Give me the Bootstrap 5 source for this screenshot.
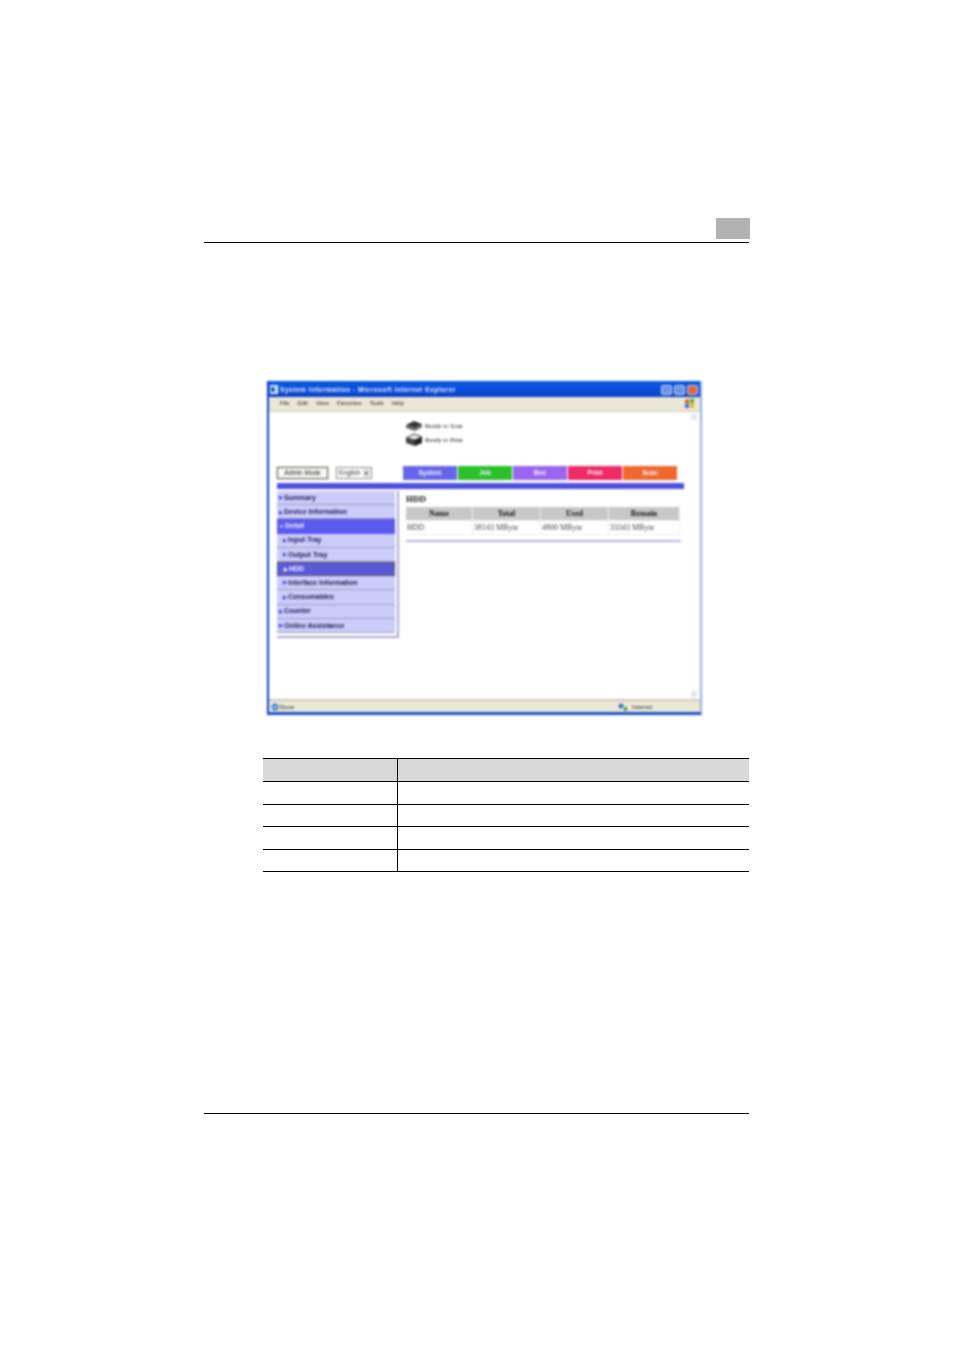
<!DOCTYPE html>
<html lang="en">
<head>
<meta charset="utf-8">
<title>HDD</title>
<link href="https://cdn.jsdelivr.net/npm/bootstrap@5.3.0/dist/css/bootstrap.min.css" rel="stylesheet">
<style>
html,body{background:#fff;margin:0;height:1350px;overflow:hidden}
.sheet{width:954px;height:1350px;padding:218px 205px 0 204px;font-family:"Liberation Sans",sans-serif}
.head-tab{width:34px;height:21px;background:#b2b2b2;margin-left:auto;margin-right:-1px}
.rule-top{border-top:1.5px solid #000;margin-top:3px;margin-right:0}
.shot{margin:138px 0 0 63px;width:435px;height:334px;background:#fff;filter:blur(.88px);border-left:2px solid #0a3fc4;border-right:2px solid #8fb0ee;border-bottom:3px solid #1c4fc8;overflow:hidden}
.title-bar{height:16px;background:linear-gradient(#0a5ae0,#0a4ad8 70%,#0b42c0);color:#eef3ff;font-size:6.5px;font-weight:700;letter-spacing:.55px;padding:1px 2px 0 1px;gap:2px}
.win-btns{gap:2px}
.win-btn{width:11px;height:10px;border-radius:2px;background:#6f93e6;border:1px solid #c5d4f5}
.win-close{background:#d9674a}
.menu-bar{height:15px;background:#ebe7d6;border-bottom:1px solid #cfcbb8;font-size:6px;color:#222;padding:0 5px 1px 11px;gap:8px}
.xp-flag{width:11px;height:11px}
.page-area{height:287px;padding:8px 7px 0 7px;position:relative}
.scroll-up{position:absolute;top:2px;right:3px;width:6px;height:6px;background:#e6e6e6}
.scroll-down{position:absolute;bottom:2px;right:3px;width:6px;height:6px;background:#e6e6e6}
.status-list{margin-left:129px;height:38px;font-family:"Liberation Serif",serif;font-size:6.5px;color:#111;gap:2px}
.status-item{height:12px;gap:2px}
.ctrl-row{margin-top:8px;height:14px}
.admin-btn{width:51px;height:12px;border:1px solid #666;background:#f7f7f4;font-size:6.5px;color:#222;margin-left:1px;box-shadow:0 0 0 1px #ddd}
.lang-box{width:36px;height:12px;border:1px solid #888;font-size:6.5px;color:#333;margin-left:8px;padding:0 1px 0 2px}
.lang-arrow{width:7px;height:8px;background:#ddd;color:#000;font-size:5px;line-height:8px;text-align:center}
.tab-row{margin-left:31px;width:274px;gap:1px}
.tab-item{height:14px;flex:1 1 0;color:#f4f4ff;font-size:6.5px;font-weight:700}
.t-sys{background:#6666e8}.t-job{background:#2cc02c}.t-box{background:#9a66ee}.t-print{background:#ee2a68}.t-scan{background:#f0672f}
.blue-strip{height:6px;background:#5050e0;margin:3px 9px 2px 1px}
.body-cols{gap:7px}
.side-nav{width:122px;margin-left:1px;height:147px;border-right:2px solid #a9a9d8;border-bottom:2px solid #a9a9d8;padding-right:2px;font-size:7px;font-weight:700;color:#1a1a50}
.nav-entry{height:14.2px;background:#ccccfb;border-bottom:1px solid #9d9db8;padding-left:2px;padding-top:1px;gap:1px}
.nav-sub{padding-left:6px}
.nav-open{background:#5a5aee;color:#eeeeff;border-bottom-color:#5a5aee}
.nav-current{background:#5a5ad8;color:#eeeeff;border:1px solid #55556a}
.nav-mark{font-size:5px;color:#3a3ae0}
.nav-open .nav-mark,.nav-current .nav-mark{color:#fff}
.detail{width:276px;font-family:"Liberation Serif",serif;padding-top:2px}
.detail-title{font-size:9px;font-weight:700;color:#111;height:12px;line-height:12px;margin-bottom:2px}
.hdd-grid{display:grid;grid-template-columns:66px 67px 67px 70px;gap:1px;font-size:8px;color:#444;width:274px;background:#eee;padding:0 1px 1px 0}
.hdd-h{background:#c8c8c8;height:13px;line-height:13px;text-align:center;font-weight:700;color:#111}
.hdd-c{background:#fff;height:13px;line-height:13px;padding-left:1px;white-space:nowrap}
.hdd-line{border-top:2px solid #b5b5e6;margin-top:5px;width:275px}
.status-bar{height:13px;background:#ece8d6;border-top:2px solid #cfcbbb;font-size:6px;color:#222;padding:1px 0 0 2px;gap:1px}
.zone{margin-left:auto;width:82px;gap:4px}
.spec-table{margin:43px 0 0 59px;width:486px;display:grid;grid-template-columns:135px 1fr;border-top:1px solid #000}
.spec-h{height:23px;background:#d9d9d9;border-bottom:1px solid #000}
.spec-c{height:22.5px;border-bottom:1px solid #000}
.spec-l{border-right:1px solid #000}
.rule-bottom{border-top:1.5px solid #000;margin-top:241px}
</style>
</head>
<body>
<div class="sheet">
  <div class="head-tab"></div>
  <div class="rule-top"></div>

  <div class="shot d-flex flex-column">
    <div class="title-bar d-flex align-items-center">
      <svg width="8" height="9" viewBox="0 0 8 9"><rect width="8" height="9" fill="#dfeaff"/><path d="M1 2h4v5H1z" fill="#2a62c8"/></svg>
      <span>System Information - Microsoft Internet Explorer</span>
      <span class="win-btns d-flex ms-auto"><span class="win-btn"></span><span class="win-btn"></span><span class="win-btn win-close"></span></span>
    </div>
    <div class="menu-bar d-flex align-items-center">
      <span>File</span><span>Edit</span><span>View</span><span>Favorites</span><span>Tools</span><span>Help</span>
      <svg class="xp-flag ms-auto" viewBox="0 0 11 11"><path d="M1 2l4-1v4l-4 .5z" fill="#d9542b"/><path d="M6 1l4-.5V5l-4 .3z" fill="#58a83a"/><path d="M1 6l4-.3v4L1 10z" fill="#3f6fd0"/><path d="M6 5.7l4-.3V10l-4-.5z" fill="#e7b52c"/></svg>
    </div>
    <div class="page-area">
      <div class="scroll-up"></div>
      <div class="scroll-down"></div>
      <div class="status-list d-flex flex-column">
        <div class="status-item d-flex align-items-center">
          <svg width="18" height="12" viewBox="0 0 18 12"><path d="M1 5l8-4 8 3-7 4z" fill="#333"/><path d="M1 5l9 3 7-4v3l-7 4-9-3z" fill="#666"/></svg>
          <span>Ready to Scan</span>
        </div>
        <div class="status-item d-flex align-items-center">
          <svg width="18" height="14" viewBox="0 0 18 14"><path d="M1 5l8-4 8 3-7 3z" fill="#eee" stroke="#333"/><path d="M1 5l9 2v6L1 10z" fill="#444"/><path d="M10 7l7-3v6l-7 3z" fill="#222"/></svg>
          <span>Ready to Print</span>
        </div>
      </div>
      <div class="ctrl-row d-flex align-items-center">
        <div class="admin-btn d-flex align-items-center justify-content-center">Admin Mode</div>
        <div class="lang-box d-flex align-items-center justify-content-between"><span>English</span><span class="lang-arrow">▾</span></div>
        <div class="tab-row d-flex">
          <div class="tab-item t-sys d-flex align-items-center justify-content-center">System</div>
          <div class="tab-item t-job d-flex align-items-center justify-content-center">Job</div>
          <div class="tab-item t-box d-flex align-items-center justify-content-center">Box</div>
          <div class="tab-item t-print d-flex align-items-center justify-content-center">Print</div>
          <div class="tab-item t-scan d-flex align-items-center justify-content-center">Scan</div>
        </div>
      </div>
      <div class="blue-strip"></div>
      <div class="body-cols d-flex">
        <div class="side-nav">
          <div class="nav-entry d-flex align-items-center"><span class="nav-mark">▶</span>Summary</div>
          <div class="nav-entry d-flex align-items-center"><span class="nav-mark">▶</span>Device Information</div>
          <div class="nav-entry nav-open d-flex align-items-center"><span class="nav-mark">▼</span>Detail</div>
          <div class="nav-entry nav-sub d-flex align-items-center"><span class="nav-mark">▶</span>Input Tray</div>
          <div class="nav-entry nav-sub d-flex align-items-center"><span class="nav-mark">▶</span>Output Tray</div>
          <div class="nav-entry nav-sub nav-current d-flex align-items-center"><span class="nav-mark">▶</span>HDD</div>
          <div class="nav-entry nav-sub d-flex align-items-center"><span class="nav-mark">▶</span>Interface Information</div>
          <div class="nav-entry nav-sub d-flex align-items-center"><span class="nav-mark">▶</span>Consumables</div>
          <div class="nav-entry d-flex align-items-center"><span class="nav-mark">▶</span>Counter</div>
          <div class="nav-entry d-flex align-items-center"><span class="nav-mark">▶</span>Online Assistance</div>
        </div>
        <div class="detail">
          <div class="detail-title">HDD</div>
          <div class="hdd-grid">
            <div class="hdd-h">Name</div><div class="hdd-h">Total</div><div class="hdd-h">Used</div><div class="hdd-h">Remain</div>
            <div class="hdd-c">HDD</div><div class="hdd-c">38143 MByte</div><div class="hdd-c">4800 MByte</div><div class="hdd-c">33343 MByte</div>
          </div>
          <div class="hdd-line"></div>
        </div>
      </div>
    </div>
    <div class="status-bar d-flex align-items-center">
      <svg width="8" height="8" viewBox="0 0 8 8"><circle cx="4" cy="4" r="3.5" fill="#3f7fd0"/><path d="M2 4h4" stroke="#fff"/></svg>
      <span>Done</span>
      <span class="zone d-flex align-items-center">
        <svg width="10" height="9" viewBox="0 0 10 9"><circle cx="3" cy="3" r="2.5" fill="#3a78c8"/><path d="M6 4h3v4H6z" fill="#4f9a4f"/></svg>
        <span>Internet</span>
      </span>
    </div>
  </div>

  <div class="spec-table">
    <div class="spec-h spec-l"></div><div class="spec-h"></div>
    <div class="spec-c spec-l"></div><div class="spec-c"></div>
    <div class="spec-c spec-l"></div><div class="spec-c"></div>
    <div class="spec-c spec-l"></div><div class="spec-c"></div>
    <div class="spec-c spec-l"></div><div class="spec-c"></div>
  </div>

  <div class="rule-bottom"></div>
</div>
<script src="https://cdn.jsdelivr.net/npm/bootstrap@5.3.0/dist/js/bootstrap.bundle.min.js"></script>
</body>
</html>
